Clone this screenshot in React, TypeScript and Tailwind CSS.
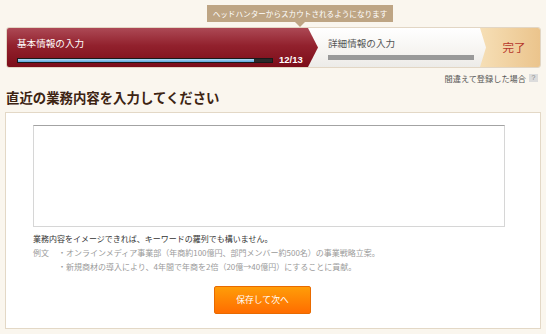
import React from "react";

export default function App() {
  const jp = { fontFamily: '"Noto Sans CJK JP", "Noto Sans", sans-serif' };
  return (
    <div className="w-[546px] h-[334px] bg-[#faf6ee] overflow-hidden" style={jp}>
      {/* tooltip */}
      <div className="h-[27px] pt-[5px]">
        <div className="ml-[207px] w-[186px] h-[17px] bg-[#bea584] text-white text-[7.6px] leading-[17px] text-center relative">
          ヘッドハンターからスカウトされるようになります
          <div className="absolute left-[88px] top-[17px] w-0 h-0 border-l-[5px] border-r-[5px] border-t-[5px] border-l-transparent border-r-transparent border-t-[#bea584]" />
        </div>
      </div>

      {/* stepper */}
      <div className="mx-[5px] ml-[6px] h-[41px] rounded-[3px] border border-[#e2d6c4] flex relative overflow-hidden bg-[linear-gradient(#ffffff,#f6f4f1_60%,#ecebe8)]">
        <div
          className="w-[311px] shrink-0 h-full pl-[10px] pt-[8px] bg-[linear-gradient(#ac4955,#92212d_45%,#7c0d19)]"
          style={{ clipPath: "polygon(0 0, 301px 0, 311px 50%, 301px 100%, 0 100%)" }}
        >
          <div className="text-white text-[9.6px] leading-[14px]">基本情報の入力</div>
          <div className="flex items-center mt-[5px]">
            <div className="w-[256px] h-[5px] bg-[#2a2a2a] border border-[#1a1a1a]">
              <div className="h-full w-[236px] bg-[linear-gradient(#b4dcf5,#5aa6dc)]" />
            </div>
            <div className="ml-[6px] text-white font-bold text-[9.5px] leading-[10px]" style={{ fontFamily: '"Liberation Sans", Arial, sans-serif' }}>12/13</div>
          </div>
        </div>
        <div className="flex-1 pl-[10px] pt-[8px]">
          <div className="text-[#555] text-[9.6px] leading-[14px]">詳細情報の入力</div>
          <div className="mt-[5px] w-[146px] h-[5px] bg-[#999]" />
        </div>
        <div
          className="w-[60px] shrink-0 h-full flex items-center justify-center pl-[8px] bg-[linear-gradient(90deg,#f6dfb6,#ebc48c)]"
          style={{ clipPath: "polygon(0 0, 100% 0, 100% 100%, 0 100%, 6px 50%)" }}
        >
          <span className="text-[#b6372c] text-[11.5px]">完了</span>
        </div>
      </div>

      {/* link */}
      <div className="h-[20px] flex items-center justify-end pr-[8px]">
        <span className="text-[#555] text-[8.2px]">間違えて登録した場合</span>
        <span className="ml-[3px] w-[9px] h-[8px] bg-[#dcdcdc] text-[#8a8a8a] text-[7px] leading-[8px] text-center" style={{ fontFamily: '"Liberation Sans", Arial, sans-serif' }}>?</span>
      </div>

      {/* heading */}
      <div className="px-[6px] h-[24px] text-[#3d2412] font-bold text-[13.4px] leading-[18px]">
        直近の業務内容を入力してください
      </div>

      {/* panel */}
      <div className="mx-[5px] h-[217px] bg-white border border-[#e3d8c6] pl-[27px] pt-[12px]">
        <div className="w-[472px] h-[102px] border border-[#d6d6d6] border-t-[#a3a3a3]" />
        <div className="mt-[5px] text-[8px] leading-[14px]">
          <div className="text-[#333]">業務内容をイメージできれば、キーワードの羅列でも構いません。</div>
          <div className="flex text-[#9a9a9a]">
            <span className="w-[25px]">例文</span>
            <span>・オンラインメディア事業部（年商約100億円、部門メンバー約500名）の事業戦略立案。</span>
          </div>
          <div className="flex text-[#9a9a9a]">
            <span className="w-[25px]"></span>
            <span>・新規商材の導入により、4年間で年商を2倍（20億→40億円）にすることに貢献。</span>
          </div>
        </div>
        <div className="mt-[12px] ml-[181px] w-[97px] h-[28px] rounded-[2px] border border-[#e86a00] bg-[linear-gradient(#ff9d08,#ff6d00)] text-white text-[8.8px] flex items-center justify-center">
          保存して次へ
        </div>
      </div>
    </div>
  );
}
